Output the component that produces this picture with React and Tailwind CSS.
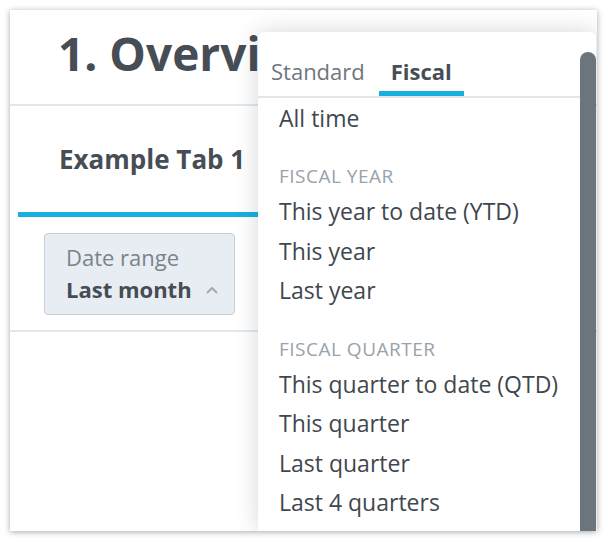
export default function App() {
  const fiscalYear = ["This year to date (YTD)", "This year", "Last year"];
  const fiscalQuarter = [
    "This quarter to date (QTD)",
    "This quarter",
    "Last quarter",
    "Last 4 quarters",
  ];

  return (
    <div className="w-[608px] h-[542px] bg-white p-[10px] font-['Open_Sans',sans-serif]">
      {/* Window */}
      <div className="relative w-[587px] h-[521px] bg-white overflow-hidden shadow-[0_1px_6px_rgba(0,0,0,0.35)]">

        {/* Title */}
        <div className="h-[96px] flex items-center pb-[9px] border-b-2 border-[#e2e7ec]">
          <div className="w-[248px] pl-[48px] overflow-hidden">
            <h1 className="text-[46px] font-bold leading-none text-[#464d55] whitespace-nowrap">
              1. Overview
            </h1>
          </div>
        </div>

        {/* Tabs */}
        <div className="flex pl-[8px]">
          <div className="h-[111px] flex items-center px-[41px] border-b-[5px] border-[#17b0de]">
            <span className="text-[26px] font-bold text-[#464d55] leading-none whitespace-nowrap">
              Example Tab 1
            </span>
          </div>
        </div>

        {/* Filter bar */}
        <div className="pt-[16px] pb-[15px] pl-[34px] border-b-2 border-[#e2e7ec]">
          <button className="w-[191px] h-[82px] flex flex-col items-start pt-[7px] px-[21px] bg-[#e8edf3] border border-[#c6ced7] rounded-[4px] text-left">
            <span className="text-[22px] leading-[32px] text-[#7a838b] whitespace-nowrap">Date range</span>
            <span className="flex items-center leading-[32px] whitespace-nowrap">
              <span className="text-[22px] font-bold text-[#454c54]">Last month</span>
              <svg className="ml-[14px] mt-[1px] shrink-0" width="12" height="8" viewBox="0 0 12 8">
                <polyline points="1,7 6,2 11,7" fill="none" stroke="#a3abb3" strokeWidth="2" />
              </svg>
            </span>
          </button>
        </div>

        {/* Date dropdown */}
        <div className="absolute left-[248px] top-[22px] right-[1px] bottom-0 flex bg-white rounded-t-[6px] shadow-[0_0_22px_rgba(40,50,70,0.2)]">
          <div className="flex-1 flex flex-col">
            <div className="flex gap-[2px] pl-[1px] border-b-2 border-[#e3e7eb]">
              <div className="h-[64px] px-[12px] pt-[19px] flex items-center border-b-[5px] border-transparent">
                <span className="text-[22px] leading-none text-[#6e777f]">Standard</span>
              </div>
              <div className="h-[64px] px-[12px] pt-[19px] flex items-center border-b-[5px] border-[#17b0de]">
                <span className="text-[22px] font-bold leading-none text-[#474e56]">Fiscal</span>
              </div>
            </div>

            <div className="pl-[21px]">
              <div className="h-[39.5px] flex items-center text-[23px] text-[#40474e]">All time</div>

              <div className="pt-[24px]">
                <div className="h-[30px] flex items-center text-[19px] tracking-[0.5px] text-[#99a2ab]">
                  FISCAL YEAR
                </div>
                {fiscalYear.map((item) => (
                  <div key={item} className="h-[39.5px] flex items-center text-[23px] text-[#40474e] whitespace-nowrap">
                    {item}
                  </div>
                ))}
              </div>

              <div className="pt-[24px]">
                <div className="h-[30px] flex items-center text-[19px] tracking-[0.5px] text-[#99a2ab]">
                  FISCAL QUARTER
                </div>
                {fiscalQuarter.map((item) => (
                  <div key={item} className="h-[39.5px] flex items-center text-[23px] text-[#40474e] whitespace-nowrap">
                    {item}
                  </div>
                ))}
              </div>
            </div>
          </div>

          {/* Scrollbar */}
          <div className="w-[16px] flex flex-col">
            <div className="mt-[20px] flex-1 bg-[#6c757e] rounded-t-full" />
          </div>
        </div>
      </div>
    </div>
  );
}
